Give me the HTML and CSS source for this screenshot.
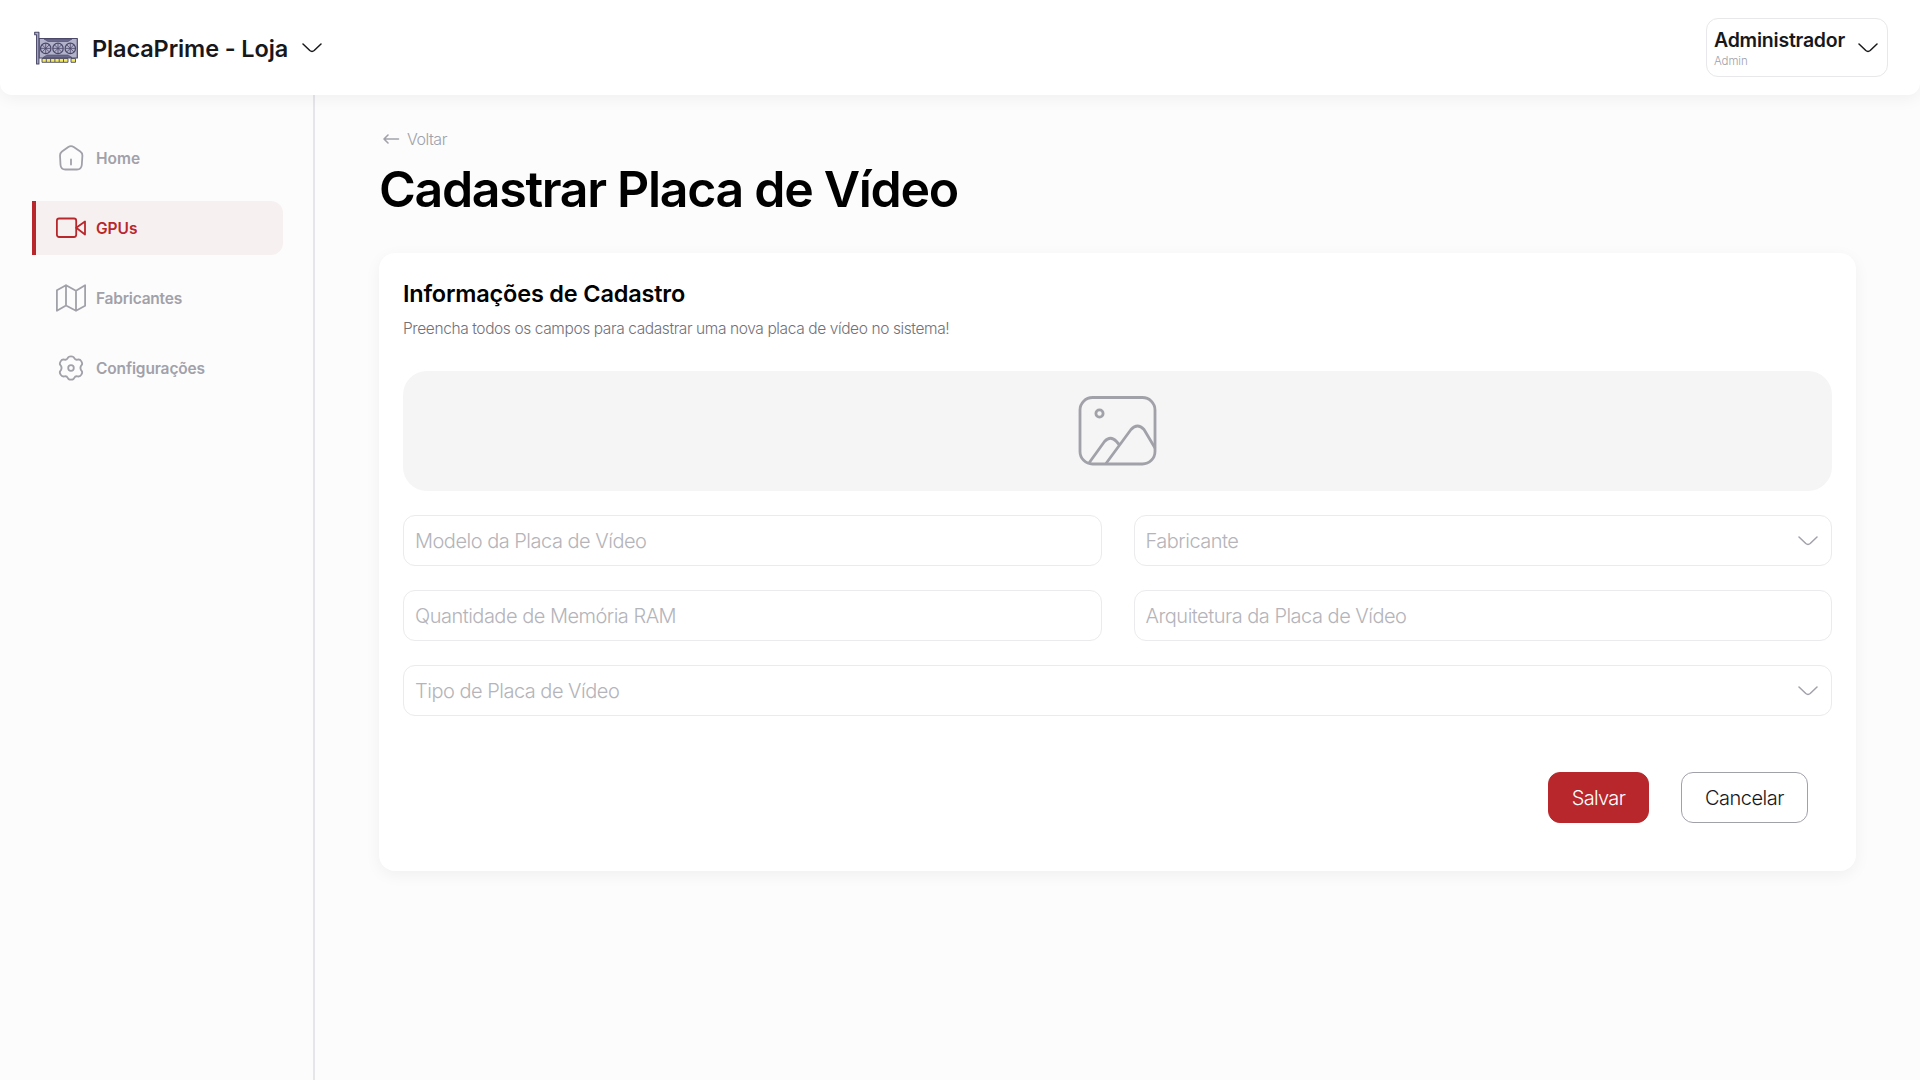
FILE: index.html
```html
<!DOCTYPE html>
<html lang="pt-BR">
<head>
<meta charset="utf-8">
<title>PlacaPrime - Loja</title>
<link rel="stylesheet" href="styles.css">
</head>
<body>
<header class="topbar">
  <div class="brand">
    <svg class="logo" viewBox="0 0 46 36" fill="none" stroke="#4a4868" stroke-width="1.2" stroke-linejoin="round">
      <path d="M5 8.500h38.300v19.500H5z" fill="#b3b2cb"/>
      <path d="M10 9l4 2.500h20l4-2.500zM9 27.500l4-2.500h21l4 2.500z" fill="#6c6a8c" stroke-width=".6"/>
      <path d="M8 28.500h26v3.800H8zM37 28.500h4.500v3.800H37z" fill="#f4ea55" stroke-width=".9"/>
      <path d="M12.300 29v3M16.600 29v3M20.900 29v3M25.200 29v3M29.500 29v3" stroke-width=".9"/>
      <g fill="#b3b2cb">
        <circle cx="11.700" cy="18.400" r="5.200"/><circle cx="24" cy="18.400" r="5.200"/><circle cx="36.300" cy="18.400" r="5.200"/>
      </g>
      <path d="M11.700 13.400v10M6.700 18.400h10M8.200 14.900l7 7M15.200 14.900l-7 7M24 13.400v10M19 18.400h10M20.500 14.900l7 7M27.500 14.900l-7 7M36.300 13.400v10M31.300 18.400h10M32.800 14.900l7 7M39.800 14.900l-7 7" stroke-width=".8"/>
      <path d="M.700 2.300h4.200v31.700H2.600V4.700H.700z" fill="#b3b2cb" stroke-width="1.100"/>
    </svg>
    <span class="brand-name">PlacaPrime - Loja</span>
    <svg class="chevron" viewBox="0 0 20 10"><path d="M1 1l6.800 6.500q2.200 1.800 4.400 0L19 1"/></svg>
  </div>
  <div class="user">
    <div class="user-text">
      <span class="user-name">Administrador</span>
      <span class="user-role">Admin</span>
    </div>
    <svg class="chevron" viewBox="0 0 20 10"><path d="M1 1l6.800 6.500q2.200 1.800 4.400 0L19 1"/></svg>
  </div>
</header>
<div class="layout">
  <nav class="sidebar">
    <a class="nav-item">
      <svg viewBox="0 0 30 30"><path d="M4 12.500Q4 10 6 8.500L12.300 4Q15 2.200 17.700 4L24.300 8.500Q26.500 10 26.400 12.500L25.800 22Q25.300 26.500 20.900 26.500H9.400Q4.900 26.500 4.500 22ZM15 16.500v5"/></svg>
      <span>Home</span>
    </a>
    <a class="nav-item active">
      <svg viewBox="0 0 30 30"><rect x=".9" y="5.500" width="19.300" height="18.500" rx="2.200"/><path d="M20.200 14.700L29 8.500v13Z"/></svg>
      <span>GPUs</span>
    </a>
    <a class="nav-item fabricantes">
      <svg viewBox="0 0 30 30"><path d="M.900 7.300L10 2.200L20 7.800L29.100 2.200V22.800L20 27.800L10 22.500L.900 27.800ZM10 2.200V22.500M20 7.800V27.800"/></svg>
      <span>Fabricantes</span>
    </a>
    <a class="nav-item config">
      <svg viewBox="0 0 30 30"><circle cx="15" cy="15" r="2.800"/><path d="M11.700 5.200Q12.200 3.300 15 3.300T18.300 5.200Q19.300 7.300 21.600 6.600Q24 6 25.400 8.400Q27.100 11.200 25.200 12.600Q23.600 15 25.200 17.400Q27.100 18.800 25.400 21.600Q24 24 21.600 23.400Q19.300 22.700 18.300 24.800Q17.800 26.700 15 26.700T11.700 24.800Q10.700 22.700 8.400 23.400Q6 24 4.600 21.600Q2.900 18.800 4.800 17.400Q6.400 15 4.800 12.600Q2.900 11.200 4.600 8.400Q6 6 8.400 6.600Q10.700 7.300 11.700 5.200Z"/></svg>
      <span>Configurações</span>
    </a>
  </nav>
  <main class="content">
    <a class="back">
      <svg viewBox="0 0 18 12"><path d="M16.500 6H2M6 2L2 6l4 4"/></svg>
      <span>Voltar</span>
    </a>
    <h1>Cadastrar Placa de Vídeo</h1>
    <section class="card">
      <h2>Informações de Cadastro</h2>
      <p class="hint">Preencha todos os campos para cadastrar uma nova placa de vídeo no sistema!</p>
      <div class="upload">
        <svg viewBox="0 0 80 72"><rect x="2" y="2.500" width="75" height="66.500" rx="12.500"/><circle cx="21.500" cy="18.500" r="3.600"/><path d="M11 68L26.500 46.500Q32.500 40 38.500 46.500L41 49.500M28 68.500L53 34.500Q59.500 27.500 66 34.500L77 53"/></svg>
      </div>
      <div class="fields">
        <div class="field"><span>Modelo da Placa de Vídeo</span></div>
        <div class="field"><span>Fabricante</span><svg class="chevron" viewBox="0 0 20 10"><path d="M1 1l6.800 6.500q2.200 1.800 4.400 0L19 1"/></svg></div>
        <div class="field"><span>Quantidade de Memória RAM</span></div>
        <div class="field"><span>Arquitetura da Placa de Vídeo</span></div>
        <div class="field wide"><span>Tipo de Placa de Vídeo</span><svg class="chevron" viewBox="0 0 20 10"><path d="M1 1l6.800 6.500q2.200 1.800 4.400 0L19 1"/></svg></div>
      </div>
      <div class="actions">
        <button class="btn primary">Salvar</button>
        <button class="btn">Cancelar</button>
      </div>
    </section>
  </main>
</div>
</body>
</html>
```
FILE: styles.css
```css
* { box-sizing: border-box; }
body {
  margin: 0;
  height: 1080px;
  overflow: hidden;
  background: #fcfcfc;
  color: #18181b;
  font-family: Inter, "Liberation Sans", sans-serif;
}
svg { display: block; flex: none; }
h1, h2, p { margin: 0; }
.topbar {
  position: relative;
  height: 95px;
  padding: 0 32px 0 34px;
  display: flex;
  align-items: center;
  justify-content: space-between;
  background: #fff;
  border-radius: 0 0 12px 12px;
  box-shadow: 0 4px 16px rgba(0, 0, 0, .05);
}
.brand { display: flex; align-items: center; }
.logo { width: 46px; height: 36px; }
.brand-name {
  width: 195px;
  margin: 0 15px 0 12px;
  padding-top: 2px;
  font-size: 23.500px;
  font-weight: 600;
  line-height: 32px;
  letter-spacing: -.120px;
  white-space: nowrap;
}
.chevron { width: 20px; height: 10px; fill: none; stroke: #18181b; stroke-width: 1.500; stroke-linecap: round; }
.user {
  width: 182px;
  height: 59px;
  padding: 0 9px 0 7px;
  display: flex;
  align-items: center;
  justify-content: space-between;
  border: 1px solid #e8e8ea;
  border-radius: 12px;
}
.user-text { display: flex; flex-direction: column; align-items: flex-start; white-space: nowrap; }
.user-name { font-size: 19.500px; font-weight: 600; line-height: 26px; letter-spacing: -.224px; }
.user-role { font-size: 11.500px; font-weight: 300; line-height: 16px; letter-spacing: -.100px; color: #a1a1aa; }
.layout { display: flex; height: 985px; }
.sidebar {
  flex: none;
  width: 315px;
  padding: 36px 30px 0 32px;
  display: flex;
  flex-direction: column;
  gap: 16px;
  border-right: 2px solid #e6e6e8;
}
.nav-item {
  height: 54px;
  padding-left: 20px;
  display: flex;
  align-items: center;
  gap: 10px;
  border-left: 4px solid transparent;
  border-radius: 0 12px 12px 0;
  color: #a1a1aa;
  font-size: 15.500px;
  font-weight: 600;
}
.nav-item svg { width: 30px; height: 30px; fill: none; stroke: currentColor; stroke-width: 1.800; stroke-linecap: round; stroke-linejoin: round; }
.fabricantes { letter-spacing: -.212px; }
.config { letter-spacing: -.136px; }
.active { border-left-color: #b8272b; background: #f7f0f1; color: #b8272b; }
.content { flex: 1; padding: 32px 64px 0; }
.back {
  display: flex;
  align-items: center;
  gap: 7px;
  height: 24px;
  padding-left: 3px;
  color: #a1a1aa;
  font-size: 16px;
  font-weight: 300;
  letter-spacing: -.500px;
}
.back svg { width: 18px; height: 12px; fill: none; stroke: currentColor; stroke-width: 1.600; stroke-linecap: round; stroke-linejoin: round; }
h1 { margin-top: 8px; font-size: 50px; font-weight: 600; line-height: 60px; letter-spacing: -1.300px; color: #000; white-space: nowrap; }
.card {
  margin-top: 34px;
  height: 618px;
  padding: 25px 24px 48px;
  background: #fff;
  border-radius: 16px;
  box-shadow: 0 4px 16px rgba(0, 0, 0, .05);
}
h2 { font-size: 23.500px; font-weight: 600; line-height: 32px; letter-spacing: -.195px; color: #000; }
.hint { margin-top: 7px; font-size: 15.500px; font-weight: 300; line-height: 24px; letter-spacing: -.395px; color: #71717a; white-space: nowrap; }
.upload {
  margin-top: 30px;
  height: 120px;
  display: flex;
  align-items: center;
  justify-content: center;
  background: #f5f5f5;
  border-radius: 24px;
}
.upload svg { width: 80px; height: 72px; fill: none; stroke: #a1a1aa; stroke-width: 2.800; stroke-linecap: butt; stroke-linejoin: round; }
.fields { margin-top: 24px; display: grid; grid-template-columns: 1fr 1fr; gap: 24px 32px; }
.field {
  height: 51px;
  padding: 0 13px 0 11px;
  display: flex;
  align-items: center;
  justify-content: space-between;
  border: 1px solid #ebebed;
  border-radius: 12px;
  color: #b4b4ba;
  font-size: 20px;
  font-weight: 300;
  letter-spacing: -.500px;
}
.field .chevron { stroke: #a1a1aa; }
.wide { grid-column: 1 / -1; }
.actions { margin-top: 56px; padding-right: 24px; display: flex; justify-content: flex-end; gap: 32px; }
.btn {
  height: 51px;
  width: 127px;
  padding: 0;
  border: 1px solid #a1a1aa;
  border-radius: 12px;
  background: #fff;
  color: #18181b;
  font: 300 20px Inter, "Liberation Sans", sans-serif;
  letter-spacing: -.500px;
}
.primary { width: 101px; border-color: #b8272b; background: #b8272b; color: #fff; letter-spacing: -.700px; }
```
